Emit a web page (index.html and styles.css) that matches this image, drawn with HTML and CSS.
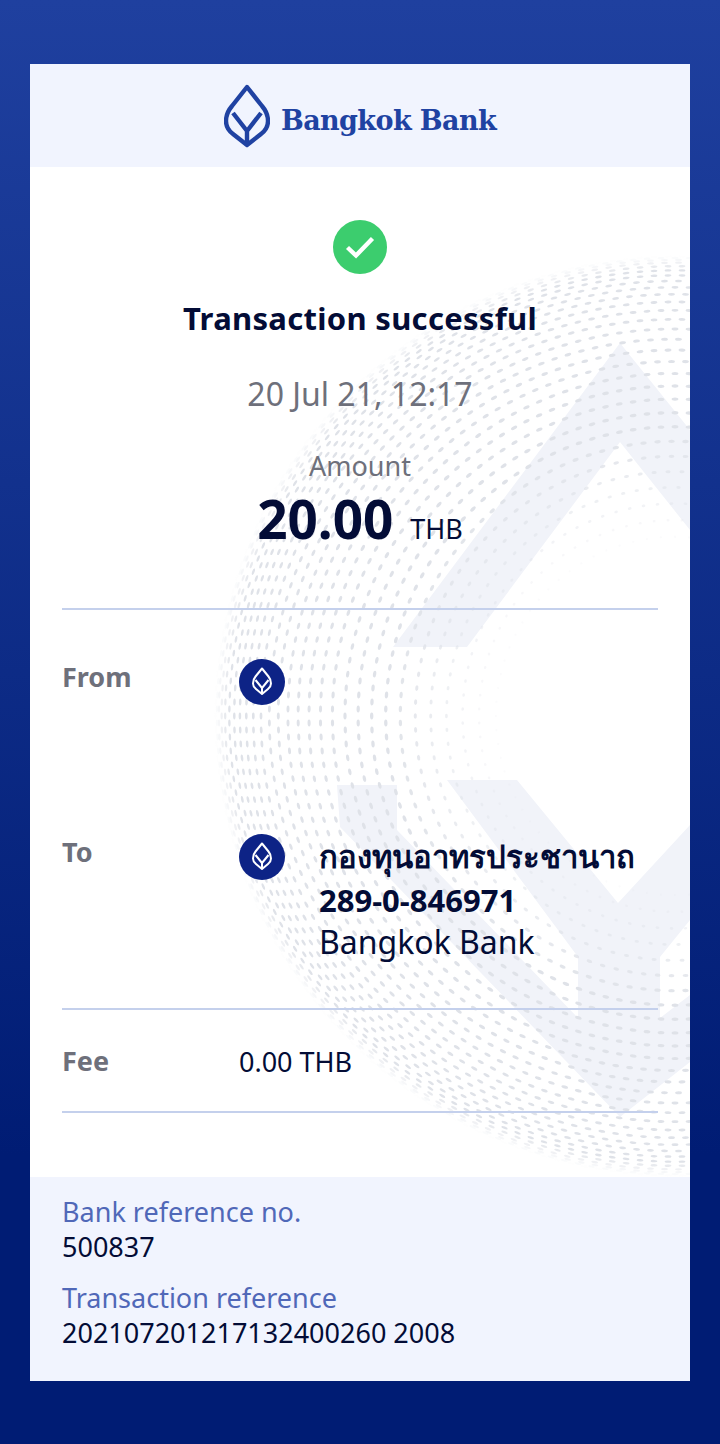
FILE: index.html
```html
<!DOCTYPE html>
<html lang="en">
<head>
<meta charset="utf-8">
<title>Transaction successful</title>
<link rel="stylesheet" href="styles.css">
</head>
<body>
<main class="card">
  <header class="brand">
    <svg class="brand-mark" viewBox="0 0 46 64" aria-hidden="true">
      <path class="leaf" d="M23 3 L38 22 Q44 29 44 37 Q44 45 37 50 L23 61 L9 50 Q2 45 2 37 Q2 29 8 22 Z"/>
      <path class="leaf" d="M9 29 L23 47 L37 29 M23 47 V61"/>
    </svg>
    <span class="brand-name">Bangkok Bank</span>
  </header>

  <section class="receipt">
    <svg class="watermark" viewBox="0 0 660 1010" aria-hidden="true">
      <path class="chevron" d="M590 176 L660 263 V363 L590 275 L437 480 H363 Z"/>
      <path class="chevron" d="M307 618 H367 V663 L548 851 V790 L417 613 H487 L588 736 L660 658 V753 L630 790 V851 L660 828 V895 L590 950 L310 660 Z"/>
      <g id="dots"></g>
    </svg>

    <div class="summary">
      <svg class="tick" viewBox="0 0 54 54" aria-hidden="true">
        <circle class="tick-disc" cx="27" cy="27" r="27"/>
        <path class="tick-mark" d="M14.5 27.5 L23 35.5 L39.5 18.5"/>
      </svg>
      <h1 class="title">Transaction successful</h1>
      <p class="date">20 Jul 21, 12:17</p>
      <p class="amount-label">Amount</p>
      <p class="amount"><strong class="amount-value">20.00</strong> <span class="amount-unit">THB</span></p>
    </div>

    <div class="row row-from">
      <span class="label">From</span>
      <div class="value">
        <svg class="bank-icon" viewBox="0 0 46 46" aria-hidden="true">
          <circle class="bank-disc" cx="23" cy="23" r="23"/>
          <path class="bank-leaf" d="M23 9.5 L29.5 17.5 Q32 20.5 32 24.5 Q32 27.5 29 30 L23 35 L17 30 Q14 27.5 14 24.5 Q14 20.5 16.500 17.500 Z M16.500 21 L23 29 L29.500 21 M23 29 V35"/>
        </svg>
      </div>
    </div>

    <div class="row row-to">
      <span class="label">To</span>
      <div class="value">
        <svg class="bank-icon" viewBox="0 0 46 46" aria-hidden="true">
          <circle class="bank-disc" cx="23" cy="23" r="23"/>
          <path class="bank-leaf" d="M23 9.5 L29.5 17.5 Q32 20.5 32 24.5 Q32 27.5 29 30 L23 35 L17 30 Q14 27.5 14 24.5 Q14 20.5 16.500 17.500 Z M16.500 21 L23 29 L29.500 21 M23 29 V35"/>
        </svg>
        <div class="account">
          <strong class="account-name">กองทุนอาทรประชานาถ</strong>
          <strong class="account-number">289-0-846971</strong>
          <span class="account-bank">Bangkok Bank</span>
        </div>
      </div>
    </div>

    <div class="row row-fee">
      <span class="label">Fee</span>
      <span class="fee">0.00 THB</span>
    </div>
  </section>

  <footer class="refs">
    <p class="ref-label">Bank reference no.</p>
    <p class="ref-value">500837</p>
    <p class="ref-label ref-gap">Transaction reference</p>
    <p class="ref-value">202107201217132400260 2008</p>
  </footer>
</main>
<script src="dots.js"></script>
</body>
</html>
```

FILE: styles.css
```css
* { box-sizing: border-box; }
html, body { margin: 0; padding: 0; }
body {
  width: 720px;
  height: 1444px;
  padding: 64px 30px 63px;
  background: linear-gradient(#1f409f 0, #001c74 80%);
  font-family: "Noto Sans", "Open Sans", sans-serif;
  color: #030c36;
}
p, h1 { margin: 0; font-weight: 400; }

.card { display: flex; flex-direction: column; height: 1317px; background: #fff; }

.brand {
  height: 103px;
  flex: none;
  display: flex;
  align-items: center;
  justify-content: center;
  gap: 11px;
  padding-bottom: 0;
  background: #f1f4fe;
  color: #2042a2;
}
.brand-mark { width: 46px; height: 64px; flex: none; }
.leaf { fill: none; stroke: #2042a2; stroke-width: 4.4; stroke-linejoin: round; }
.brand-name {
  font-family: "DejaVu Serif", serif;
  font-weight: 700;
  font-size: 27px;
  letter-spacing: -0.6px;
  margin-top: 10px;
  white-space: nowrap;
}

.receipt { position: relative; flex: 1; padding: 0 32px; overflow: hidden; }
.watermark { position: absolute; left: 0; top: 0; width: 660px; height: 1010px; }
.chevron { fill: #f1f3f9; }
.dot { fill: #dfe2e8; }

.summary {
  position: relative;
  height: 443px;
  padding-top: 53px;
  display: flex;
  flex-direction: column;
  align-items: center;
  border-bottom: 2px solid #c4d0ec;
}
.tick { width: 54px; height: 54px; display: block; }
.tick-disc { fill: #3ccd6e; }
.tick-mark { fill: none; stroke: #fff; stroke-width: 4.4; }
.title { margin-top: 22px; font-size: 31px; line-height: 44px; font-weight: 700; letter-spacing: 0.3px; }
.date { margin-top: 32px; font-size: 32px; line-height: 44px; color: #6e707b; }
.amount-label { margin-top: 32px; font-size: 27px; line-height: 36px; color: #6e707b; }
.amount { margin-top: 4px; line-height: 62px; display: flex; align-items: baseline; gap: 17px; }
.amount-value { font-size: 53px; font-weight: 700; }
.amount-unit { font-size: 27px; }

.row { position: relative; display: grid; grid-template-columns: 177px 1fr; }
.row-from { height: 175px; padding-top: 47px; }
.row-to { height: 225px; padding-top: 47px; border-bottom: 2px solid #c4d0ec; }
.row-fee { height: 103px; padding-top: 31px; border-bottom: 2px solid #c4d0ec; }
.label { font-size: 27px; line-height: 40px; font-weight: 700; color: #6e707b; }
.value { display: flex; gap: 34px; padding-top: 2px; }
.bank-icon { width: 46px; height: 46px; flex: none; }
.bank-disc { fill: #0d2386; }
.bank-leaf { fill: none; stroke: #fff; stroke-width: 2; stroke-linejoin: round; }
.account { display: flex; flex-direction: column; }
.account-name, .account-number { font-size: 31px; line-height: 44px; font-weight: 700; white-space: nowrap; }
.account-bank { font-size: 32px; line-height: 40px; }
.fee { font-size: 27px; line-height: 40px; padding-top: 1px; }

.refs { flex: none; height: 204px; padding: 17px 32px 0; background: #f1f4fe; }
.ref-label { font-size: 27px; line-height: 36px; color: #5068b8; }
.ref-value { font-size: 27px; line-height: 34px; }
.ref-gap { margin-top: 16px; }
```

FILE: dots.js
```js
// Dotted globe behind the receipt: rings of dots on an orthographic sphere.
(function () {
  var group = document.getElementById('dots');
  var NS = 'http://www.w3.org/2000/svg';
  var cx = 645, cy = 549, R = 460;      // sphere in receipt coordinates
  var step = 0.04, spacing = 14;
  for (var k = 8; k * step < Math.PI / 2; k++) {
    var theta = k * step;
    var r = R * Math.sin(theta);
    if (r < 165) continue;
    var foreshorten = Math.cos(theta);
    var count = Math.round(2 * Math.PI * r / spacing);
    for (var i = 0; i < count; i++) {
      var a = (i + (k % 2) / 2) / count * 2 * Math.PI;
      var x = cx + r * Math.cos(a);
      var y = cy + r * Math.sin(a);
      if (x > 660 || x < 0) continue;
      var inner = Math.min(1, (r - 165) / 120);
      var outer = Math.min(1, (R - r) / 14);
      var e = document.createElementNS(NS, 'ellipse');
      e.setAttribute('class', 'dot');
      e.setAttribute('cx', x.toFixed(1));
      e.setAttribute('cy', y.toFixed(1));
      e.setAttribute('rx', Math.max(0.7, 1 + 1.6 * (1 - foreshorten) * 0 + foreshorten * 0.9 * inner).toFixed(2));
      e.setAttribute('ry', (0.8 + 2.6 * inner).toFixed(2));
      e.setAttribute('opacity', (inner * outer).toFixed(2));
      e.setAttribute('transform', 'rotate(' + (a * 180 / Math.PI).toFixed(1) + ' ' + x.toFixed(1) + ' ' + y.toFixed(1) + ')');
      group.appendChild(e);
    }
  }
})();
```
